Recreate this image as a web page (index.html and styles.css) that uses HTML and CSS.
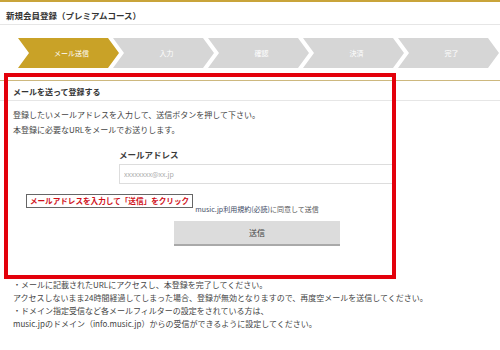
FILE: index.html
```html
<!DOCTYPE html>
<html lang="ja">
<head>
    <meta charset="UTF-8">
    <meta name="viewport" content="width=device-width, initial-scale=1.0">
    <title>新規会員登録（プレミアムコース）</title>
    <link rel="stylesheet" href="styles.css">
</head>
<body>
    <div class="page-head">
        <h1>新規会員登録（プレミアムコース）</h1>
    </div>

    <ol class="steps">
        <li class="step active">メール送信</li>
        <li class="step">入力</li>
        <li class="step">確認</li>
        <li class="step">決済</li>
        <li class="step">完了</li>
    </ol>

    <div class="panel">
        <div class="panel-head">メールを送って登録する</div>
        <div class="panel-body">
            <p class="lead">登録したいメールアドレスを入力して、送信ボタンを押して下さい。<br>本登録に必要なURLをメールでお送りします。</p>

            <div class="form">
                <label class="form-label" for="mail">メールアドレス</label>
                <input class="form-input" id="mail" type="text" placeholder="xxxxxxxx@xx.jp">
                <p class="agree"><a href="#">music.jp利用規約(必読)</a>に同意して送信</p>
                <button class="send-btn" type="button">送信</button>
            </div>
        </div>
    </div>

    <div class="notes">
        <p>・メールに記載されたURLにアクセスし、本登録を完了してください。<br>アクセスしないまま24時間経過してしまった場合、登録が無効となりますので、再度空メールを送信してください。</p>
        <p>・ドメイン指定受信など各メールフィルターの設定をされている方は、<br>music.jpのドメイン（info.music.jp）からの受信ができるように設定してください。</p>
    </div>

    <!-- annotations -->
    <div class="mark-box"></div>
    <div class="mark-note">メールアドレスを入力して「送信」をクリック</div>
</body>
</html>
```

FILE: styles.css
```css
body {
    margin: 0;
    padding: 0;
    font-family: "Noto Sans CJK JP", "Noto Sans", sans-serif;
    color: #444;
    background: #fff;
    width: 500px;
    height: 350px;
    overflow: hidden;
    position: relative;
}

p {
    margin: 0;
}

.page-head {
    border-top: 2px solid #c9a43a;
    border-bottom: 1px solid #e6e6e6;
    padding: 4px 6px 0;
    height: 18px;
}

.page-head h1 {
    margin: 0;
    font-size: 8.5px;
    line-height: 18px;
    font-weight: bold;
    color: #333;
}

.steps {
    list-style: none;
    margin: 13px 0 0;
    padding: 0 0 0 18px;
    display: flex;
    height: 30px;
}

.step {
    width: 101px;
    flex: none;
    height: 30px;
    margin-left: -6px;
    padding-left: 6px;
    box-sizing: border-box;
    background: #d6d6d6;
    color: #fff;
    font-size: 7px;
    display: flex;
    align-items: center;
    justify-content: center;
    clip-path: polygon(0 0, calc(100% - 11px) 0, 100% 50%, calc(100% - 11px) 100%, 0 100%, 11px 50%);
}

.step:first-child {
    margin-left: 0;
}

.step.active {
    background: #c9a227;
}

.panel {
    margin-top: 12px;
    border-top: 1px solid #cdb87e;
}

.panel-head {
    padding: 2px 13px 0;
    line-height: 17px;
    font-size: 8px;
    font-weight: bold;
    color: #333;
    border-bottom: 1px solid #e6e6e6;
}

.panel-body {
    padding: 6px 13px 0;
}

.lead {
    font-size: 8px;
    line-height: 15px;
}

.form {
    margin-left: 106px;
    width: 276px;
    display: flex;
    flex-direction: column;
}

.form-label {
    margin-top: 10px;
    font-size: 8.5px;
    line-height: 15px;
    font-weight: bold;
    color: #3a3a3a;
}

.form-input {
    margin-top: 2px;
    height: 20px;
    box-sizing: border-box;
    border: 1px solid #ddd;
    padding: 0 4px;
    font-family: inherit;
    font-size: 7px;
    color: #444;
    outline: none;
}

.form-input::placeholder {
    color: #aaa;
}

.agree {
    margin-top: 19px;
    font-size: 7px;
    line-height: 12px;
    text-align: center;
    color: #555;
}

.agree a {
    color: #3d4a66;
    text-decoration: none;
}

.send-btn {
    align-self: center;
    margin-top: 6px;
    width: 166px;
    height: 25px;
    border: none;
    border-bottom: 2px solid #a9a9a9;
    background: #dcdcdc;
    font-family: inherit;
    font-size: 8px;
    color: #444;
    padding: 0;
}

.notes {
    margin-top: 32px;
    padding: 0 13px;
    font-size: 8px;
    line-height: 13px;
}

.mark-box {
    position: absolute;
    left: 4px;
    top: 73px;
    width: 392px;
    height: 206px;
    box-sizing: border-box;
    border: 4px solid #e3000b;
}

.mark-note {
    position: absolute;
    left: 26px;
    top: 194px;
    width: 167px;
    height: 14px;
    box-sizing: border-box;
    border: 1px solid #666;
    background: #fff;
    color: #d0101a;
    font-size: 7.6px;
    font-weight: bold;
    line-height: 12px;
    text-align: center;
    white-space: nowrap;
}
```
